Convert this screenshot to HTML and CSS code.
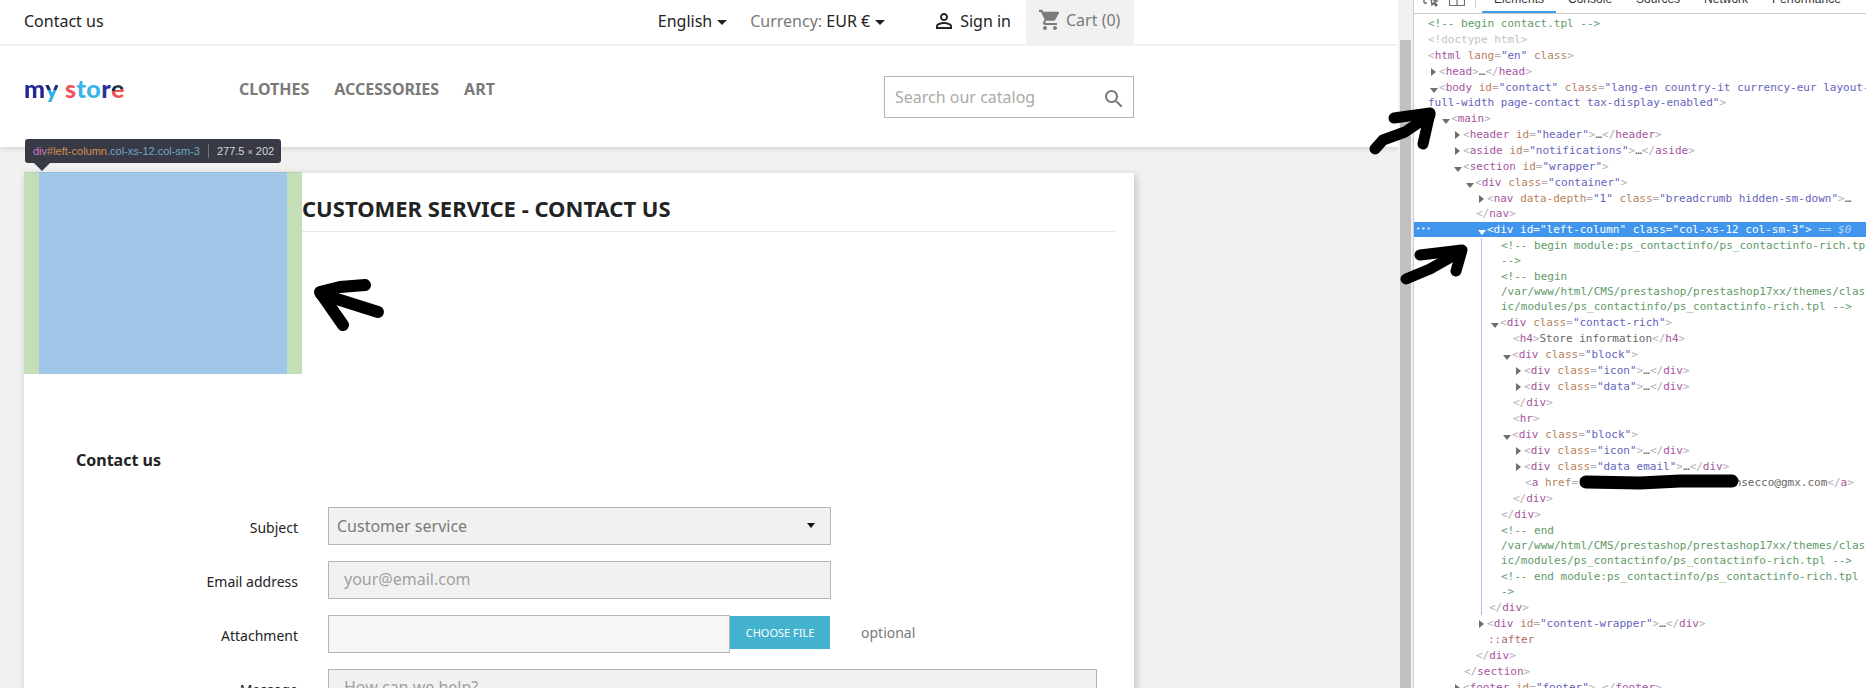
FILE: index.html
```html
<!DOCTYPE html>
<html lang="en">
<head>
<meta charset="utf-8">
<title>Contact us</title>
<link rel="stylesheet" href="styles.css">
</head>
<body>
<div class="page">
  <header class="site-header">
    <div class="topbar">
      <a class="top-contact">Contact us</a>
      <div class="top-right">
        <span class="lang">English<i class="caret"></i></span>
        <span class="currency"><span class="cur-label">Currency:</span> EUR €<i class="caret"></i></span>
        <span class="signin"><svg class="ic24" viewBox="0 0 24 24"><path d="M12 5.9c1.16 0 2.1.94 2.1 2.1s-.94 2.1-2.1 2.1S9.9 9.16 9.9 8s.94-2.1 2.1-2.1m0 9c2.97 0 6.1 1.46 6.1 2.1v1.1H5.9V17c0-.64 3.13-2.1 6.1-2.1M12 4C9.79 4 8 5.79 8 8s1.79 4 4 4 4-1.79 4-4-1.79-4-4-4zm0 9c-2.67 0-8 1.34-8 4v3h16v-3c0-2.66-5.33-4-8-4z"/></svg>Sign in</span>
        <span class="cart"><svg class="ic24" viewBox="0 0 24 24"><path d="M7 18c-1.1 0-1.99.9-1.99 2S5.9 22 7 22s2-.9 2-2-.9-2-2-2zM1 2v2h2l3.6 7.59-1.35 2.45c-.16.28-.25.61-.25.96 0 1.1.9 2 2 2h12v-2H7.42c-.14 0-.25-.11-.25-.25l.03-.12.9-1.83h7.45c.75 0 1.41-.41 1.75-1.03l3.58-6.47c.08-.14.12-.31.12-.48 0-.55-.45-1-1-1H5.21l-.94-2H1z"/><path d="M17 18c-1.1 0-1.99.9-1.99 2s.89 2 1.99 2 2-.9 2-2-.9-2-2-2z"/></svg>Cart (0)</span>
      </div>
    </div>
    <div class="mainbar">
      <div class="logo"><span class="l-m">m</span><span class="l-y">y</span> <span class="l-s">s</span><span class="l-t">t</span><span class="l-o">o</span><span class="l-r">r</span><span class="l-e">e</span></div>
      <nav class="menu"><a>CLOTHES</a><a>ACCESSORIES</a><a>ART</a></nav>
      <div class="search"><span>Search our catalog</span><svg class="ic24" viewBox="0 0 24 24"><path d="M15.5 14h-.79l-.28-.27C15.41 12.59 16 11.11 16 9.5 16 5.91 13.09 3 9.5 3S3 5.91 3 9.5 5.91 16 9.5 16c1.61 0 3.09-.59 4.23-1.57l.27.28v.79l5 4.99L20.49 19l-4.99-5zm-6 0C7.01 14 5 11.99 5 9.5S7.01 5 9.5 5 14 7.01 14 9.5 11.99 14 9.5 14z"/></svg></div>
    </div>
  </header>

  <main class="wrapper">
    <section class="card">
      <h1 class="page-title">CUSTOMER SERVICE - CONTACT US</h1>
      <h2 class="form-title">Contact us</h2>
      <div class="form">
        <label>Subject</label>
        <div class="field select">Customer service<i class="sel-caret"></i></div>
        <div></div>
        <label>Email address</label>
        <div class="field ph">your@email.com</div>
        <div></div>
        <label>Attachment</label>
        <div class="file"><div class="file-input"></div><div class="file-btn">CHOOSE FILE</div></div>
        <div class="optional">optional</div>
        <label>Message</label>
        <div class="field ph wide">How can we help?</div>
      </div>
    </section>
  </main>

  <div class="overlay"></div>
  <div class="tip"><span class="tip-tag">div</span><span class="tip-id">#left-column</span><span class="tip-cls">.col-xs-12.col-sm-3</span><i class="tip-sep"></i><span class="tip-size">277.5 <small>×</small> 202</span></div>
</div>

<div class="scrollbar"><div class="thumb"></div></div>

<aside class="devtools">
  <div class="tabbar">
    <svg class="dt-ic" viewBox="0 0 16 14"><path d="M1 0v4M1 4h3M8 0l1 6 1.5-2 2.5 3 1-1-2.5-3 2.5-1z" fill="none" stroke="#6e6e6e" stroke-width="1.4"/></svg>
    <svg class="dt-ic dt-ic2" viewBox="0 0 16 14"><path d="M.5 0v6.500h15V0M8 0v6" fill="none" stroke="#6e6e6e" stroke-width="1.2"/></svg>
    <i class="dt-sep"></i>
    <span class="tab active">Elements</span><span class="tab">Console</span><span class="tab">Sources</span><span class="tab">Network</span><span class="tab">Performance</span>
  </div>
  <div class="tree">
    <div class="r l0 c">&lt;!-- begin contact.tpl --&gt;</div>
    <div class="r l0 dt">&lt;!doctype html&gt;</div>
    <div class="r l0"><b>&lt;</b><u>html</u> <em>lang</em><b>=</b><s>"en"</s> <em>class</em><b>&gt;</b></div>
    <div class="r l1 closed"><b>&lt;</b><u>head</u><b>&gt;</b>…<b>&lt;/</b><u>head</u><b>&gt;</b></div>
    <div class="r l1 open"><b>&lt;</b><u>body</u> <em>id</em><b>=</b><s>"contact"</s> <em>class</em><b>=</b><s>"lang-en country-it currency-eur layout-</s></div>
    <div class="r l0 cont"><s>full-width page-contact tax-display-enabled"</s><b>&gt;</b></div>
    <div class="r l2 open"><b>&lt;</b><u>main</u><b>&gt;</b></div>
    <div class="r l3 closed"><b>&lt;</b><u>header</u> <em>id</em><b>=</b><s>"header"</s><b>&gt;</b>…<b>&lt;/</b><u>header</u><b>&gt;</b></div>
    <div class="r l3 closed"><b>&lt;</b><u>aside</u> <em>id</em><b>=</b><s>"notifications"</s><b>&gt;</b>…<b>&lt;/</b><u>aside</u><b>&gt;</b></div>
    <div class="r l3 open"><b>&lt;</b><u>section</u> <em>id</em><b>=</b><s>"wrapper"</s><b>&gt;</b></div>
    <div class="r l4 open"><b>&lt;</b><u>div</u> <em>class</em><b>=</b><s>"container"</s><b>&gt;</b></div>
    <div class="r l5 closed"><b>&lt;</b><u>nav</u> <em>data-depth</em><b>=</b><s>"1"</s> <em>class</em><b>=</b><s>"breadcrumb hidden-sm-down"</s><b>&gt;</b>…</div>
    <div class="r l4 cont"><b>&lt;/</b><u>nav</u><b>&gt;</b></div>
    <div class="r l5 open sel"><span class="dots">•••</span>&lt;div id="left-column" class="col-xs-12 col-sm-3"&gt; <span class="eq">== $0</span></div>
    <div class="children">
      <div class="r l6 c">&lt;!-- begin module:ps_contactinfo/ps_contactinfo-rich.tpl</div>
      <div class="r l6 c cont">--&gt;</div>
      <div class="r l6 c">&lt;!-- begin</div>
      <div class="r l6 c cont">/var/www/html/CMS/prestashop/prestashop17xx/themes/class</div>
      <div class="r l6 c cont">ic/modules/ps_contactinfo/ps_contactinfo-rich.tpl --&gt;</div>
      <div class="r l6 open"><b>&lt;</b><u>div</u> <em>class</em><b>=</b><s>"contact-rich"</s><b>&gt;</b></div>
      <div class="r l7"><b>&lt;</b><u>h4</u><b>&gt;</b><span class="txt">Store information</span><b>&lt;/</b><u>h4</u><b>&gt;</b></div>
      <div class="r l7 open"><b>&lt;</b><u>div</u> <em>class</em><b>=</b><s>"block"</s><b>&gt;</b></div>
      <div class="r l8 closed"><b>&lt;</b><u>div</u> <em>class</em><b>=</b><s>"icon"</s><b>&gt;</b>…<b>&lt;/</b><u>div</u><b>&gt;</b></div>
      <div class="r l8 closed"><b>&lt;</b><u>div</u> <em>class</em><b>=</b><s>"data"</s><b>&gt;</b>…<b>&lt;/</b><u>div</u><b>&gt;</b></div>
      <div class="r l7"><b>&lt;/</b><u>div</u><b>&gt;</b></div>
      <div class="r l7"><b>&lt;</b><u>hr</u><b>&gt;</b></div>
      <div class="r l7 open"><b>&lt;</b><u>div</u> <em>class</em><b>=</b><s>"block"</s><b>&gt;</b></div>
      <div class="r l8 closed"><b>&lt;</b><u>div</u> <em>class</em><b>=</b><s>"icon"</s><b>&gt;</b>…<b>&lt;/</b><u>div</u><b>&gt;</b></div>
      <div class="r l8 closed"><b>&lt;</b><u>div</u> <em>class</em><b>=</b><s>"data email"</s><b>&gt;</b>…<b>&lt;/</b><u>div</u><b>&gt;</b></div>
      <div class="r l8"><b>&lt;</b><u>a</u> <em>href</em><b>=</b><s>"</s><span class="redacted"></span><span class="txt">nsecco@gmx.com</span><b>&lt;/</b><u>a</u><b>&gt;</b></div>
      <div class="r l7"><b>&lt;/</b><u>div</u><b>&gt;</b></div>
      <div class="r l6"><b>&lt;/</b><u>div</u><b>&gt;</b></div>
      <div class="r l6 c">&lt;!-- end</div>
      <div class="r l6 c cont">/var/www/html/CMS/prestashop/prestashop17xx/themes/class</div>
      <div class="r l6 c cont">ic/modules/ps_contactinfo/ps_contactinfo-rich.tpl --&gt;</div>
      <div class="r l6 c">&lt;!-- end module:ps_contactinfo/ps_contactinfo-rich.tpl --</div>
      <div class="r l6 c cont">-&gt;</div>
      <div class="r l5"><b>&lt;/</b><u>div</u><b>&gt;</b></div>
    </div>
    <div class="r l5 closed"><b>&lt;</b><u>div</u> <em>id</em><b>=</b><s>"content-wrapper"</s><b>&gt;</b>…<b>&lt;/</b><u>div</u><b>&gt;</b></div>
    <div class="r l5 pseudo">::after</div>
    <div class="r l4"><b>&lt;/</b><u>div</u><b>&gt;</b></div>
    <div class="r l3"><b>&lt;/</b><u>section</u><b>&gt;</b></div>
    <div class="r l3 closed"><b>&lt;</b><u>footer</u> <em>id</em><b>=</b><s>"footer"</s><b>&gt;</b>…<b>&lt;/</b><u>footer</u><b>&gt;</b></div>
  </div>
</aside>

<svg class="scribbles" viewBox="0 0 1866 688">
  <g fill="none" stroke="#000" stroke-linecap="round" stroke-linejoin="round">
    <g stroke-width="12">
      <path d="M365 285 L340 287 L320 292 L343 325"/>
      <path d="M321 294 L378 312"/>
    </g>
    <g stroke-width="11">
      <path d="M1375 149 L1383 140 L1405 132 L1430 115"/>
      <path d="M1394 118 L1430 113 L1423 144"/>
    </g>
    <g stroke-width="11">
      <path d="M1406 279 L1430 269 L1460 252"/>
      <path d="M1420 255 L1462 250 L1456 271"/>
    </g>
    <path d="M1586 482 L1640 483 L1680 481 L1732 481" stroke-width="13"/>
  </g>
</svg>
</body>
</html>
```

FILE: styles.css
```css
* { box-sizing: border-box; }
html, body { margin: 0; height: 688px; overflow: hidden; }
body {
  display: flex;
  position: relative;
  font-family: "Noto Sans", sans-serif;
  color: #232323;
  background: #fff;
}

/* Store page */
.page {
  position: relative;
  width: 1398px;
  height: 688px;
  overflow: hidden;
  flex: none;
  background: #f1f1f1;
}
.site-header {
  background: #fff;
  box-shadow: 0 2px 5px 0 rgba(0, 0, 0, .11);
  height: 147px;
  position: relative;
}
.topbar {
  height: 46px;
  border-bottom: 2px solid #f1f1f1;
  padding: 0 264px 0 24px;
  display: flex;
  justify-content: space-between;
  font-size: 16px;
  line-height: 43px;
}
.top-right { display: flex; }
.caret {
  display: inline-block;
  width: 0;
  height: 0;
  border: 5px solid transparent;
  border-top-color: #232323;
  border-bottom: 0;
  margin-left: 5px;
  vertical-align: 2px;
}
.lang { margin-right: 23px; }
.cur-label { color: #7a7a7a; }
.currency { margin-right: 47px; }
.signin { display: flex; align-items: center; height: 42px; margin-right: 15px; }
.signin .ic24 { margin-right: 4px; fill: #232323; }
.ic24 { width: 24px; height: 24px; flex: none; }
.cart {
  width: 108px;
  height: 44px;
  background: #f1f1f1;
  color: #7a7a7a;
  display: flex;
  align-items: flex-start;
  padding-left: 12px;
  line-height: 40px;
}
.cart .ic24 { fill: #7a7a7a; margin: 8px 4px 0 0; }

.mainbar {
  position: relative;
  display: flex;
  padding: 30px 264px 0 24px;
}
.logo {
  width: 215px;
  font-family: "Lato", sans-serif;
  font-weight: 900;
  font-size: 25px;
  line-height: 24px;
  letter-spacing: .5px;
  white-space: nowrap;
}
.logo span { -webkit-background-clip: text; background-clip: text; }
.l-m { color: transparent; background: linear-gradient(100deg, #2fb0e6 0 14%, #23288f 14%); }
.l-y { color: transparent; background: linear-gradient(180deg, #1f2a6b 0 58%, #2fb0e6 58%); }
.l-s { color: #f2525a; }
.l-t { color: #37b4e8; }
.l-o { color: #37b4e8; }
.l-r { color: #2b2f9b; }
.l-e { color: transparent; background: linear-gradient(170deg, #f2525a 0 42%, #12344a 42% 56%, #f2525a 56%); }
.menu {
  display: flex;
  gap: 25px;
  font-size: 16px;
  font-weight: 700;
  line-height: 26px;
  color: #7a7a7a;
}
.search {
  margin-left: auto;
  width: 250px;
  height: 42px;
  border: 1px solid #b5b5b5;
  padding-left: 10px;
  display: flex;
  justify-content: space-between;
  align-items: center;
  font-size: 16px;
  color: #acaaa6;
}
.search .ic24 { fill: #7a7a7a; margin: 3px 7px 0 0; }

.wrapper { padding: 26px 0 0 24px; }
.card {
  width: 1110px;
  height: 600px;
  background: #fff;
  box-shadow: 2px 2px 8px 0 rgba(0, 0, 0, .2);
  padding-top: 20px;
}
.page-title {
  margin: 0 19px 0 278px;
  font-size: 22px;
  font-weight: 700;
  line-height: 30px;
  height: 39px;
  border-bottom: 1px solid #e6e6e6;
  color: #232323;
  white-space: nowrap;
}
.form-title {
  margin: 0;
  padding: 218px 0 0 52px;
  font-size: 16px;
  font-weight: 700;
  line-height: 20px;
  height: 264px;
}
.form {
  margin-top: 11px;
  display: grid;
  grid-template-columns: 274px 503px auto;
  column-gap: 30px;
  row-gap: 16px;
  padding-bottom: 40px;
  grid-auto-rows: 38px;
  width: 1075px;
  font-size: 14px;
}
.form label { text-align: right; line-height: 42px; color: #232323; }
.field {
  background: #f1f1f1;
  border: 1px solid #b5b5b5;
  font-size: 16px;
  line-height: 35px;
  color: #7a7a7a;
  position: relative;
}
.select { padding-left: 8px; line-height: 36px; }
.sel-caret {
  position: absolute;
  right: 15px;
  top: 15px;
  border: 4px solid transparent;
  border-top: 5px solid #111;
  border-bottom: 0;
}
.ph { padding-left: 15px; color: #a0a0a0; }
.wide { width: 769px; height: 60px; }
.file { display: flex; align-items: center; }
.file-input {
  width: 402px;
  height: 38px;
  background: #f6f6f6;
  border: 1px solid #b5b5b5;
}
.file-btn {
  width: 100px;
  height: 33px;
  margin-top: -3px;
  background: #43b2cf;
  color: #fff;
  font-size: 11px;
  line-height: 34px;
  text-align: center;
}
.optional { line-height: 36px; color: #7a7a7a; }

/* Element inspector highlight */
.overlay {
  position: absolute;
  left: 24px;
  top: 172px;
  width: 278px;
  height: 202px;
  border: solid rgba(147, 196, 125, .55);
  border-width: 0 15px;
  background: rgba(111, 168, 220, .66);
  background-clip: padding-box;
}
.tip {
  position: absolute;
  left: 25px;
  top: 139px;
  width: 256px;
  height: 24px;
  padding-left: 8px;
  background: #383a45;
  border-radius: 3px;
  display: flex;
  align-items: center;
  font-family: "Liberation Sans", sans-serif;
  font-size: 11px;
  white-space: nowrap;
}
.tip::after {
  content: "";
  position: absolute;
  left: 9px;
  top: 24px;
  border: 8px solid transparent;
  border-top-color: #383a45;
  border-bottom: 0;
}
.tip-tag { color: #d279c4; }
.tip-id { color: #d28f52; }
.tip-cls { color: #6fa8c8; }
.tip-sep { width: 1px; height: 14px; background: #70737c; margin: 0 8px; }
.tip-size { color: #d6d6d6; }
.tip-size small { font-size: 9px; }

/* Scrollbar */
.scrollbar { width: 15px; height: 688px; flex: none; background: #f1f1f1; padding: 40px 2px 0; }
.thumb { height: 100%; background: #c1c1c1; }

/* DevTools */
.devtools {
  flex: 1;
  min-width: 0;
  height: 688px;
  overflow: hidden;
  background: #fff;
  border-left: 1px solid #ccc;
  font-family: "DejaVu Sans Mono", monospace;
  font-size: 11px;
}
.tabbar {
  height: 14px;
  border-bottom: 1px solid #ccc;
  display: flex;
  position: relative;
  overflow: hidden;
  font-family: "Liberation Sans", sans-serif;
  font-size: 12px;
  color: #333;
}
.dt-ic { width: 16px; height: 14px; margin: -1px 0 0 9px; flex: none; }
.dt-ic2 { margin-left: 10px; }
.dt-sep { width: 1px; height: 8px; background: #ccc; margin-left: 10px; flex: none; }
.tab {
  position: relative;
  padding: 0 12px;
  margin-top: -9px;
  height: 22px;
  line-height: 16px;
  flex: none;
}
.tab:first-of-type { margin-left: 6px; }
.tab.active { border-bottom: 2px solid #3d9be9; }
.tree { padding-top: 1px; white-space: nowrap; }
.r {
  height: 15px;
  line-height: 15px;
  margin-top: 1px;
  color: #555;
  position: relative;
}
.r.cont { margin-top: 0; }
.l0 { padding-left: 14px; }
.l1 { padding-left: 26px; }
.l2 { padding-left: 38px; }
.l3 { padding-left: 50px; }
.l4 { padding-left: 62px; }
.l5 { padding-left: 74px; }
.l6 { padding-left: 86px; }
.l7 { padding-left: 98px; }
.l8 { padding-left: 110px; }
.r b { font-weight: 400; color: #b3adb3; }
.r u { text-decoration: none; color: #a655a0; }
.r em { font-style: normal; color: #b87f5c; }
.r s { text-decoration: none; color: #6464bd; }
.r.c { color: #5f9a68; }
.r.dt { color: #c4c4c4; }
.r.pseudo { color: #b36a6a; }
.txt { color: #666; }
.redacted { display: inline-block; width: 150px; height: 1px; }
.open::before, .closed::before {
  content: "";
  display: inline-block;
  width: 0;
}
.closed::before {
  margin-left: -9px;
  margin-right: 3px;
  border-left: 5px solid #6e6e6e;
  border-top: 4px solid transparent;
  border-bottom: 4px solid transparent;
  vertical-align: -1px;
}
.open::before {
  margin-left: -10px;
  margin-right: 1px;
  border-top: 5px solid #6e6e6e;
  border-left: 4px solid transparent;
  border-right: 4px solid transparent;
  vertical-align: -2px;
}
.sel { background: #3f96ec; color: #fff; }
.sel::before { border-top-color: #fff; }
.dots {
  position: absolute;
  left: 2px;
  font-size: 7px;
  letter-spacing: 1px;
  color: #fff;
}
.eq { font-style: italic; color: #b6d4f4; }
.children { border-left: 1px solid #a9c1e4; margin-left: 67px; }
.children .r.l5 { padding-left: 7px; }
.children .l6 { padding-left: 19px; }
.children .l7 { padding-left: 31px; }
.children .l8 { padding-left: 43px; }

.scribbles {
  position: absolute;
  left: 0;
  top: 0;
  width: 1866px;
  height: 688px;
  pointer-events: none;
}
```
